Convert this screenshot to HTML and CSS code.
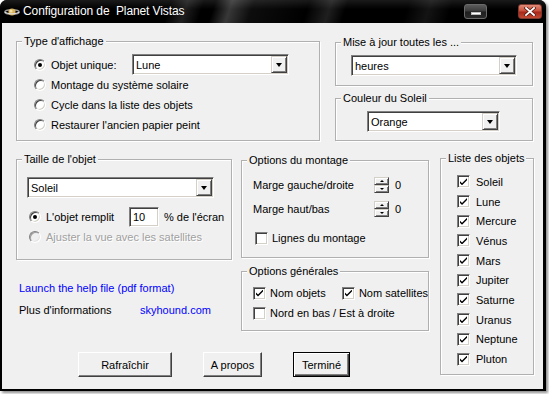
FILE: index.html
```html
<!DOCTYPE html>
<html lang="fr">
<head>
<meta charset="utf-8">
<title>Configuration de Planet Vistas</title>
<link rel="stylesheet" href="styles.css">
</head>
<body>
<div class="window">
  <div class="titlebar">
    <svg class="appicon" width="16" height="10" viewBox="0 0 16 10">
      <ellipse cx="8" cy="5" rx="7.2" ry="2.3" fill="none" stroke="#9a9a9a" stroke-width="1.4"/>
      <circle cx="8" cy="5" r="3.6" fill="#d9b25a"/>
      <circle cx="7" cy="4" r="1.6" fill="#f4e2a8"/>
      <path d="M0.8 5.3 Q8 8.6 15.2 5.3" fill="none" stroke="#e0e0e0" stroke-width="1.2"/>
    </svg>
    <span class="title">Configuration de&nbsp; Planet Vistas</span>
    <div class="tb-btns">
      <span class="tb-min"><span class="bar"></span></span>
      <span class="tb-close">
        <svg width="12" height="9" viewBox="0 0 12 9"><path d="M2 1 L10 8 M10 1 L2 8" stroke="#5a1a12" stroke-width="3.4" stroke-linecap="square"/><path d="M2 1 L10 8 M10 1 L2 8" stroke="#fff" stroke-width="1.8" stroke-linecap="square"/></svg>
      </span>
    </div>
  </div>
  <div class="client">
    <div class="toprow">
      <div class="grp g-type">
        <span class="lgd">Type d'affichage</span>
        <div class="gb">
          <div class="row row-first">
            <label class="opt w-objet"><span class="radio on"></span>Objet unique:</label>
            <div class="combo w-lune"><span class="cval">Lune</span><span class="cbtn"><span class="tri"></span></span></div>
          </div>
          <div class="row"><label class="opt"><span class="radio"></span>Montage du système solaire</label></div>
          <div class="row"><label class="opt"><span class="radio"></span>Cycle dans la liste des objets</label></div>
          <div class="row"><label class="opt"><span class="radio"></span>Restaurer l'ancien papier peint</label></div>
        </div>
      </div>
      <div class="rstack">
        <div class="grp g-maj">
          <span class="lgd">Mise à jour toutes les ...</span>
          <div class="gb">
            <div class="combo w-heures"><span class="cval">heures</span><span class="cbtn"><span class="tri"></span></span></div>
          </div>
        </div>
        <div class="grp g-coul">
          <span class="lgd">Couleur du Soleil</span>
          <div class="gb">
            <div class="combo w-orange"><span class="cval">Orange</span><span class="cbtn"><span class="tri"></span></span></div>
          </div>
        </div>
      </div>
    </div>
    <div class="bottomrow">
      <div class="leftarea">
        <div class="cols">
          <div class="col1">
            <div class="grp g-taille">
              <span class="lgd">Taille de l'objet</span>
              <div class="gb">
                <div class="combo w-soleil"><span class="cval">Soleil</span><span class="cbtn"><span class="tri"></span></span></div>
                <div class="row taille-row">
                  <label class="opt w-remplit"><span class="radio on"></span>L'objet remplit</label>
                  <div class="edit">10</div>
                  <span class="pct">% de l'écran</span>
                </div>
                <div class="row taille-row2">
                  <label class="opt disabled"><span class="radio dis"></span>Ajuster la vue avec les satellites</label>
                </div>
              </div>
            </div>
            <div class="links">
              <a class="link help">Launch the help file (pdf format)</a>
              <div class="info"><span class="info-lbl">Plus d'informations</span><a class="link">skyhound.com</a></div>
            </div>
          </div>
          <div class="col2">
            <div class="grp g-mont">
              <span class="lgd">Options du montage</span>
              <div class="gb">
                <div class="row mrow"><span class="mlbl">Marge gauche/droite</span><span class="spin"><span class="sb up"></span><span class="sb down"></span></span><span class="sval">0</span></div>
                <div class="row mrow"><span class="mlbl">Marge haut/bas</span><span class="spin"><span class="sb up"></span><span class="sb down"></span></span><span class="sval">0</span></div>
                <div class="row mcheck"><label class="chk"><span class="cb"></span>Lignes du montage</label></div>
              </div>
            </div>
            <div class="grp g-gen">
              <span class="lgd">Options générales</span>
              <div class="gb">
                <div class="row">
                  <label class="chk w-nom"><span class="cb on"></span>Nom objets</label>
                  <label class="chk"><span class="cb on"></span>Nom satellites</label>
                </div>
                <div class="row"><label class="chk"><span class="cb"></span>Nord en bas / Est à droite</label></div>
              </div>
            </div>
          </div>
        </div>
        <div class="buttons">
          <span class="btn w-raf">Rafraîchir</span>
          <span class="btn w-apr">A propos</span>
          <span class="btn default w-ter">Terminé</span>
        </div>
      </div>
      <div class="grp g-liste">
        <span class="lgd">Liste des objets</span>
        <div class="gb">
          <label class="chk lrow"><span class="cb on"></span>Soleil</label>
          <label class="chk lrow"><span class="cb on"></span>Lune</label>
          <label class="chk lrow"><span class="cb on"></span>Mercure</label>
          <label class="chk lrow"><span class="cb on"></span>Vénus</label>
          <label class="chk lrow"><span class="cb on"></span>Mars</label>
          <label class="chk lrow"><span class="cb on"></span>Jupiter</label>
          <label class="chk lrow"><span class="cb on"></span>Saturne</label>
          <label class="chk lrow"><span class="cb on"></span>Uranus</label>
          <label class="chk lrow"><span class="cb on"></span>Neptune</label>
          <label class="chk lrow"><span class="cb on"></span>Pluton</label>
        </div>
      </div>
    </div>
  </div>
</div>
</body>
</html>
```

FILE: styles.css
```css
* { box-sizing: border-box; }
html, body { margin: 0; padding: 0; background: #fff; }
body {
  font-family: "Liberation Sans", Arial, sans-serif;
  font-size: 11px;
  color: #000;
  width: 549px;
  height: 394px;
  overflow: hidden;
}

.window {
  width: 546px;
  height: 391px;
  background: #000;
  border-radius: 7px 7px 0 0;
  box-shadow: 2px 2px 3px rgba(0,0,0,0.45);
  display: flex;
  flex-direction: column;
}

.titlebar {
  height: 23px;
  display: flex;
  align-items: center;
  border-radius: 7px 7px 0 0;
  background:
    linear-gradient(180deg, rgba(255,255,255,0.10) 0, rgba(255,255,255,0) 40%),
    linear-gradient(108deg, rgba(255,255,255,0) 0 31%, rgba(255,255,255,0.12) 34%, rgba(255,255,255,0) 37%,
      rgba(255,255,255,0) 39%, rgba(255,255,255,0.22) 42%, rgba(255,255,255,0.05) 46%,
      rgba(255,255,255,0) 56%, rgba(255,255,255,0.12) 60%, rgba(255,255,255,0) 63%,
      rgba(255,255,255,0) 74%, rgba(255,255,255,0.08) 78%, rgba(255,255,255,0) 82%),
    #000;
}
.appicon { margin-left: 4px; flex: none; }
.title {
  margin-left: 3px;
  color: #fff;
  font-size: 12px;
  letter-spacing: -0.1px;
  line-height: 14px;
  margin-top: -1px;
}
.tb-btns {
  margin-left: auto;
  margin-right: 4px;
  align-self: flex-start;
  margin-top: 4px;
  display: flex;
  gap: 31px;
}
.tb-min {
  width: 23px;
  height: 15px;
  border: 1px solid #6a6a6a;
  border-radius: 3px;
  background: linear-gradient(180deg, #5c5c5c 0, #3a3a3a 48%, #1e1e1e 52%, #2a2a2a 100%);
  display: flex;
  justify-content: center;
  align-items: flex-end;
  padding-bottom: 3px;
}
.tb-min .bar {
  width: 10px;
  height: 3px;
  background: #fff;
  border: 1px solid #bbb;
}
.tb-close {
  width: 24px;
  height: 15px;
  border: 1px solid #7a3a30;
  border-radius: 3px;
  background: linear-gradient(180deg, #e08a78 0, #c9503c 45%, #a8281a 55%, #c24a34 100%);
  display: flex;
  justify-content: center;
  align-items: center;
}

.client {
  flex: 1;
  margin: 0 3px 2px 2px;
  background: #f0f0f0;
}

/* group boxes */
.grp {
  border: 1px solid #b0b0b0;
  box-shadow: 1px 1px 0 #fff, inset 1px 1px 0 #fff;
}
.lgd {
  display: block;
  width: max-content;
  white-space: nowrap;
  margin: -7px 0 0 5px;
  padding: 0 2px;
  line-height: 13px;
  background: #f0f0f0;
}

.row { display: flex; align-items: center; height: 20px; }
.opt { display: flex; align-items: center; gap: 5px; white-space: nowrap; }
.chk { display: flex; align-items: center; gap: 4px; white-space: nowrap; }

.radio {
  width: 12px;
  height: 12px;
  border-radius: 50%;
  background: #fff;
  border: 1px solid;
  border-color: #808080 #fff #fff #808080;
  box-shadow: inset 1px 1px 0 #404040, inset -1px -1px 0 #d4d0c8;
  display: flex;
  align-items: center;
  justify-content: center;
  flex: none;
}
.radio.on::after {
  content: "";
  width: 4px;
  height: 4px;
  border-radius: 50%;
  background: #000;
}
.radio.dis { background: #f0f0f0; box-shadow: inset 1px 1px 0 #a0a0a0, inset -1px -1px 0 #e4e4e4; }
.disabled { color: #a0a0a0; text-shadow: 1px 1px 0 #fff; }

.cb {
  width: 13px;
  height: 13px;
  background: #fff;
  border: 1px solid;
  border-color: #808080 #fff #fff #808080;
  box-shadow: inset 1px 1px 0 #404040, inset -1px -1px 0 #d4d0c8;
  flex: none;
  position: relative;
}
.cb.on::after {
  content: "";
  position: absolute;
  left: 2px;
  top: 2px;
  width: 7px;
  height: 7px;
  background: #000;
  clip-path: polygon(0 43%, 0 71%, 29% 100%, 100% 29%, 100% 0, 29% 71%);
}

.combo {
  height: 21px;
  padding: 1px;
  background: #fff;
  border: 1px solid;
  border-color: #808080 #fff #fff #808080;
  box-shadow: inset 1px 1px 0 #404040, inset -1px -1px 0 #d4d0c8;
  display: flex;
  align-items: stretch;
}
.cval { flex: 1; padding-left: 2px; display: flex; align-items: center; }
.cbtn {
  width: 16px;
  background: #f0f0f0;
  border: 1px solid;
  border-color: #d4d0c8 #404040 #404040 #d4d0c8;
  box-shadow: inset 1px 1px 0 #fff, inset -1px -1px 0 #808080;
  display: flex;
  align-items: center;
  justify-content: center;
}
.tri {
  width: 0;
  height: 0;
  border-top: 4px solid #000;
  border-left: 3.5px solid transparent;
  border-right: 3.5px solid transparent;
  margin-top: 1px;
}

.edit {
  width: 30px;
  height: 20px;
  background: #fff;
  border: 1px solid;
  border-color: #808080 #fff #fff #808080;
  box-shadow: inset 1px 1px 0 #404040, inset -1px -1px 0 #d4d0c8;
  padding-left: 3px;
  display: flex;
  align-items: center;
}

/* top row */
.toprow { display: flex; align-items: flex-start; padding: 18px 0 0 14px; }
.g-type { width: 304px; height: 100px; }
.g-type > .gb { padding: 6px 0 0 17px; }
.row-first { height: 21px; }
.w-objet { width: 98px; }
.w-lune { width: 157px; }

.rstack { display: flex; flex-direction: column; margin-left: 15px; margin-top: 1px; }
.g-maj { width: 198px; height: 44px; }
.g-maj > .gb { padding: 6px 0 0 15px; }
.w-heures { width: 166px; }
.g-coul { width: 198px; height: 43px; margin-top: 12px; }
.g-coul > .gb { padding: 6px 0 0 31px; }
.w-orange { width: 133px; }

/* bottom row */
.bottomrow { display: flex; align-items: flex-start; padding-left: 14px; margin-top: 17px; }
.leftarea { display: flex; flex-direction: column; }
.cols { display: flex; align-items: flex-start; }
.col1 { width: 216px; margin-top: 1px; }
.g-taille { width: 216px; height: 101px; }
.g-taille > .gb { padding: 11px 0 0 10px; }
.w-soleil { width: 187px; }
.taille-row { margin-top: 9px; padding-left: 2px; }
.w-remplit { width: 100px; }
.pct { margin-left: 5px; }
.taille-row2 { padding-left: 2px; }

.links { padding-left: 3px; margin-top: 22px; display: flex; flex-direction: column; gap: 9px; line-height: 13px; }
.link { color: #0000ff; text-decoration: none; }
.info { display: flex; }
.info-lbl { width: 121px; }

.col2 { width: 188px; margin-left: 9px; margin-top: 2px; }
.g-mont { width: 188px; height: 98px; }
.g-mont > .gb { padding: 6px 0 0 11px; }
.mrow { height: 24px; }
.mlbl { width: 121px; }
.spin { width: 15px; height: 16px; display: flex; flex-direction: column; }
.sb {
  flex: 1;
  background: #f0f0f0;
  border: 1px solid;
  border-color: #d4d0c8 #404040 #404040 #d4d0c8;
  box-shadow: inset 1px 1px 0 #fff, inset -1px -1px 0 #808080;
  display: flex;
  align-items: center;
  justify-content: center;
}
.sb::after {
  content: "";
  width: 0;
  height: 0;
  border-left: 2px solid transparent;
  border-right: 2px solid transparent;
}
.sb.up::after { border-bottom: 2px solid #000; }
.sb.down::after { border-top: 2px solid #000; }
.sval { margin-left: 6px; }
.mcheck { margin-top: 7px; padding-left: 2px; }

.g-gen { width: 188px; height: 60px; margin-top: 13px; }
.g-gen > .gb { padding: 5px 0 0 11px; }
.w-nom { width: 89px; }

.buttons { display: flex; gap: 31px; padding-left: 62px; margin-top: 21px; }
.btn {
  height: 25px;
  display: flex;
  align-items: center;
  justify-content: center;
  background: #f0f0f0;
  border: 1px solid;
  border-color: #fff #404040 #404040 #fff;
  box-shadow: inset -1px -1px 0 #808080;
}
.btn.default {
  border: 1px solid #000;
  box-shadow: inset 1px 1px 0 #fff, inset -1px -1px 0 #404040, inset -2px -2px 0 #808080;
}
.w-raf { width: 94px; }
.w-apr { width: 59px; }
.w-ter { width: 57px; }

.g-liste { width: 94px; height: 217px; margin-left: 11px; }
.g-liste > .gb { padding: 7px 0 0 16px; }
.lrow { height: 19.7px; gap: 6px; }
```
